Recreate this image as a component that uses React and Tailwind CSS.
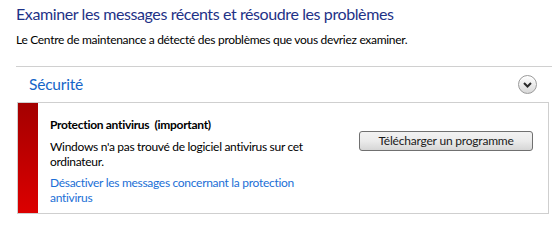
import React from "react";

const ChevronButton = () => (
  <div className="w-[19px] h-[19px] rounded-full border border-[#9a9a9a] bg-gradient-to-b from-white to-[#d8d8d8] flex items-center justify-center shadow-[inset_0_1px_0_#fff]">
    <svg width="9" height="6" viewBox="0 0 9 6">
      <path d="M1 1 L4.5 4.5 L8 1" fill="none" stroke="#2a2a2a" strokeWidth="2" />
    </svg>
  </div>
);

export default function App() {
  return (
    <div className="w-[552px] h-[228px] bg-white overflow-hidden font-['Lato',sans-serif] text-black">
      <div className="pl-4 pt-[3px]">
        <h1 className="text-[16px] leading-[22px] text-[#1e3287] tracking-[-0.4px]">
          Examiner les messages récents et résoudre les problèmes
        </h1>
        <p className="mt-[7px] text-[12px] leading-[16px] tracking-[-0.3px]">
          Le Centre de maintenance a détecté des problèmes que vous devriez examiner.
        </p>
        <div className="mt-[18px] h-px bg-[#d0d0d0]" />
      </div>

      <div className="pl-[17px] pr-[3px]">
        <div className="flex items-center justify-between h-[35px] pr-[12px]">
          <span className="pl-[12px] text-[15.5px] text-[#1464c8] tracking-[-0.2px]">Sécurité</span>
          <ChevronButton />
        </div>
        <div className="flex border border-[#cfcfcf] h-[112px]">
          <div className="w-[20px] bg-gradient-to-b from-[#a40000] to-[#dc0000]" />
          <div className="flex-1 flex pl-[12px] pt-[14px] text-[12px] leading-[15px] tracking-[-0.3px]">
            <div className="w-[262px]">
              <div className="font-bold">Protection antivirus&nbsp; (important)</div>
              <div className="mt-[7px]">
                Windows n'a pas trouvé de logiciel antivirus sur cet ordinateur.
              </div>
              <div className="mt-[6px] text-[#1c6fd6]">
                Désactiver les messages concernant la protection antivirus
              </div>
            </div>
            <div className="flex-1 flex justify-end pr-[15px] pt-[14px]">
              <button className="h-[20px] w-[174px] rounded-[3px] border border-[#707070] bg-gradient-to-b from-[#f2f2f2] via-[#ebebeb] to-[#d6d6d6] text-[12px] leading-[18px] text-[#1a1a1a] tracking-[-0.2px]">
                Télécharger un programme
              </button>
            </div>
          </div>
        </div>
      </div>
    </div>
  );
}
